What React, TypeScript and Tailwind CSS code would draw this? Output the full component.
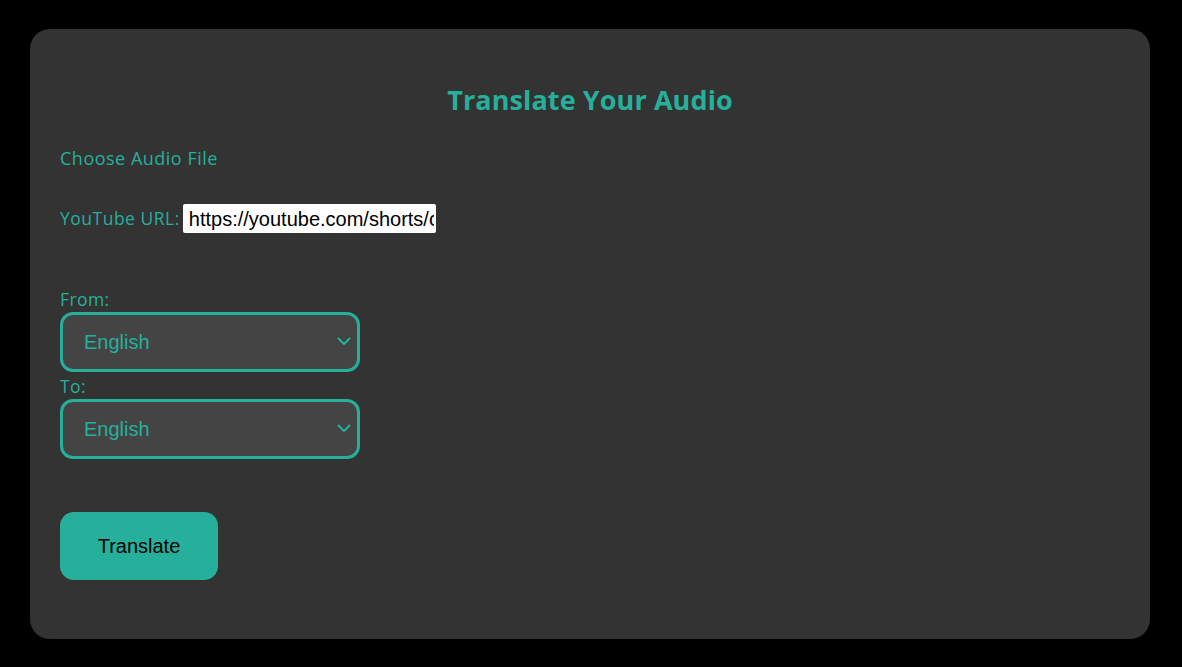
import React from 'react'

const teal = 'text-[#26b09b]'

function LangSelect() {
  return (
    <div className="relative w-[300px]">
      <select
        defaultValue="English"
        className="appearance-none w-full h-[60px] rounded-[13px] border-[3px] border-[#26b09b] bg-[#444444] pl-[21px] text-[20px] text-[#26b09b] outline-none"
        style={{ fontFamily: '"Liberation Sans", Arial, sans-serif' }}
      >
        <option>English</option>
        <option>Spanish</option>
        <option>French</option>
      </select>
      <svg
        className="pointer-events-none absolute right-[9px] top-[25px]"
        width="14"
        height="9"
        viewBox="0 0 14 9"
        fill="none"
      >
        <path d="M1.5 1.5 L7 7 L12.5 1.5" stroke="#26b09b" strokeWidth="2" strokeLinecap="round" strokeLinejoin="round" />
      </svg>
    </div>
  )
}

export default function App() {
  return (
    <div className="min-h-[667px] w-full bg-black pt-[29px] pl-[30px] pr-[32px] pb-[28px]" style={{ fontFamily: '"Open Sans", Lato, sans-serif' }}>
      <div className="flex h-[610px] flex-col rounded-[20px] bg-[#333333] px-[30px] pt-[55px]">
        <h1 className={`text-center text-[27px] font-bold leading-[32px] tracking-[0.1px] ${teal}`}>Translate Your Audio</h1>

        <div className={`mt-[31px] text-[18px] leading-[22px] tracking-[0.5px] ${teal}`}>Choose Audio File</div>

        <div className="mt-[35px] flex items-center gap-[3px]">
          <span className={`text-[17.5px] tracking-[0.5px] ${teal}`}>YouTube URL:</span>
          <input
            defaultValue="https://youtube.com/shorts/c"
            className="h-[29px] w-[253px] rounded-[2px] bg-white pl-[6px] pr-[2px] text-[20px] text-black outline-none"
            style={{ fontFamily: '"Liberation Sans", Arial, sans-serif' }}
          />
        </div>

        <div className={`mt-[55px] text-[17.5px] leading-[22px] tracking-[0.4px] ${teal}`}>From:</div>
        <div className="mt-[2px]">
          <LangSelect />
        </div>
        <div className={`mt-[2px] text-[17.5px] leading-[24px] tracking-[0.4px] ${teal}`}>To:</div>
        <div className="mt-[1px]">
          <LangSelect />
        </div>

        <button
          className="mt-[53px] h-[68px] w-[158px] rounded-[14px] bg-[#26b09b] text-[20px] text-black"
          style={{ fontFamily: '"Liberation Sans", Arial, sans-serif' }}
        >
          Translate
        </button>
      </div>
    </div>
  )
}
